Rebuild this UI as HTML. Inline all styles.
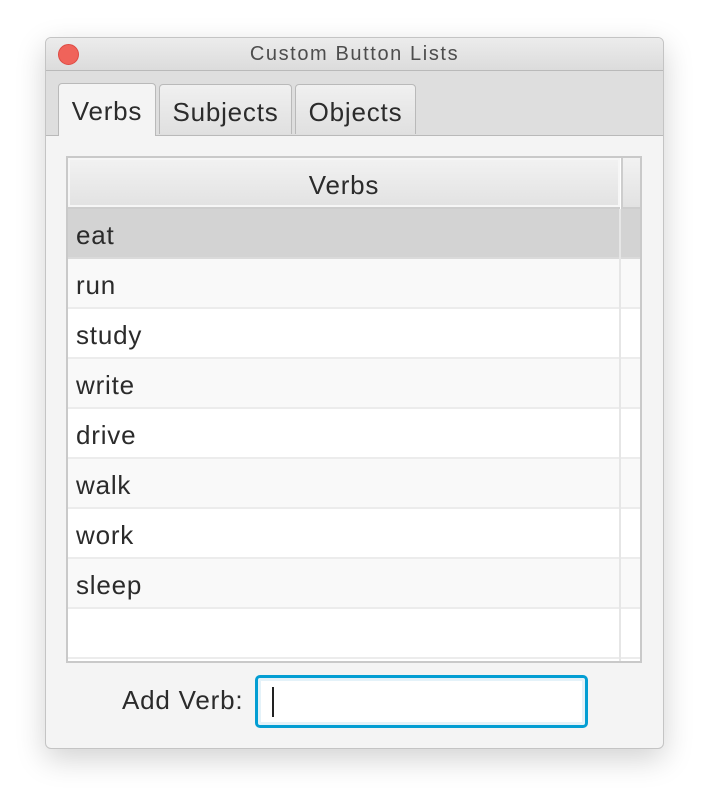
<!DOCTYPE html>
<html><head><style>
body{margin:0;width:715px;height:794px;background:#fff;font-family:"Liberation Sans",sans-serif;position:relative;overflow:hidden;color:#2b2b2b}
.win{position:absolute;left:45px;top:37px;width:617px;height:710px;border:1px solid #c4c4c4;border-radius:6px;background:#f4f4f4;box-shadow:0 10px 30px rgba(0,0,0,.18);overflow:hidden}
.title{position:absolute;left:0;top:0;width:100%;height:32px;background:linear-gradient(#ececec,#dcdcdc);border-bottom:1px solid #b9b9b9;text-align:center;font-size:20px;letter-spacing:1.6px;line-height:33px;color:#4d4d4d}
.dot{position:absolute;left:12px;top:6px;width:21px;height:21px;border-radius:50%;background:#f0635a;border:1px solid #de4b44;box-sizing:border-box}
.tabbar{position:absolute;left:0;top:33px;width:100%;height:64px;background:#dedede;border-bottom:1px solid #b9b9b9}
.tab{position:absolute;top:12px;height:50px;border:1px solid #b9b9b9;border-bottom:none;border-radius:4px 4px 0 0;background:linear-gradient(#f0f0f0,#e0e0e0);font-size:26px;letter-spacing:0.8px;text-align:center;line-height:54px;color:#2b2b2b;box-sizing:border-box}
.tab.sel{background:#f4f4f4;height:53px;z-index:2}
.table{position:absolute;left:20px;top:118px;width:576px;height:507px;border:2px solid #c9c9c9;background:#fff;box-sizing:border-box;overflow:hidden}
.hdr{position:absolute;left:0;top:0;width:552px;height:51px;background:linear-gradient(#f2f2f2,#e2e2e2);border-bottom:2px solid #cdcdcd;box-sizing:border-box;text-align:center;font-size:26px;letter-spacing:0.8px;line-height:54px;box-shadow:inset 0 0 0 2px #f6f6f6}
.hdr2{position:absolute;left:553px;top:0;width:20px;height:51px;background:linear-gradient(#f2f2f2,#e2e2e2);border-bottom:2px solid #cdcdcd;border-left:2px solid #cdcdcd;box-sizing:border-box}
.row{position:absolute;left:0;width:572px;height:50px;border-bottom:2px solid #ececec;box-sizing:border-box;font-size:26px;letter-spacing:0.8px;line-height:52px;padding-left:8px}
.vl{position:absolute;left:551px;top:51px;width:2px;height:460px;background:#e6e6e6}
.lbl{position:absolute;left:76px;top:647px;font-size:26px;letter-spacing:0.8px}
.inp{position:absolute;left:209px;top:637px;width:333px;height:53px;border:3px solid #039ed3;border-radius:5px;background:#fff;box-sizing:border-box;box-shadow:inset 0 0 0 3px #e4f2f9}
.cur{position:absolute;left:14px;top:9px;width:2px;height:30px;background:#222}
</style></head><body>
<div class="win">
<div class="title"><div class="dot"></div>Custom Button Lists</div>
<div class="tabbar">
<div class="tab sel" style="left:12px;width:98px">Verbs</div>
<div class="tab" style="left:113px;width:133px;top:13px;height:50px">Subjects</div>
<div class="tab" style="left:249px;width:121px;top:13px;height:50px">Objects</div>
</div>
<div class="table">
<div class="hdr">Verbs</div><div class="hdr2"></div>
<div class="row" style="top:51px;background:#d3d3d3;border-bottom-color:#dadada">eat</div>
<div class="row" style="top:101px;background:#f9f9f9">run</div>
<div class="row" style="top:151px;background:#fff">study</div>
<div class="row" style="top:201px;background:#f9f9f9">write</div>
<div class="row" style="top:251px;background:#fff">drive</div>
<div class="row" style="top:301px;background:#f9f9f9">walk</div>
<div class="row" style="top:351px;background:#fff">work</div>
<div class="row" style="top:401px;background:#f9f9f9">sleep</div>
<div class="row" style="top:451px;background:#fff"></div>
<div class="vl"></div>
</div>
<div class="lbl">Add Verb:</div>
<div class="inp"><div class="cur"></div></div>
</div>
</body></html>
